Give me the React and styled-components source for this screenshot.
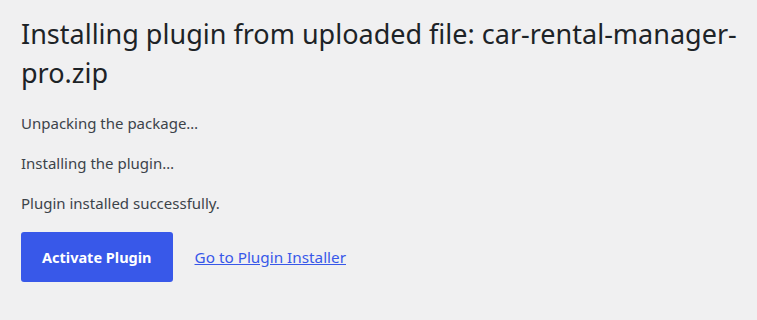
import React from 'react'
import styled, { createGlobalStyle } from 'styled-components'

const GlobalStyle = createGlobalStyle`
  html, body {
    margin: 0;
    padding: 0;
    background: #f0f0f1;
  }
  body {
    font-family: "Noto Sans", "Open Sans", sans-serif;
    color: #3c434a;
  }
`;

const Wrap = styled.div`
  padding: 14px 18px 20px 21px;
`;

const Title = styled.h1`
  margin: 0 0 20px;
  font-size: 27px;
  font-weight: 400;
  line-height: 39px;
  color: #1d2327;
`;

const Step = styled.p`
  margin: 0 0 18px;
  font-size: 15px;
  line-height: 22px;
`;

const Actions = styled.div`
  display: flex;
  align-items: center;
  gap: 22px;
  margin-top: 1px;
`;

const Button = styled.a`
  display: inline-flex;
  align-items: center;
  justify-content: center;
  height: 50px;
  padding: 0 21px;
  background: #3858e9;
  color: #fff;
  border-radius: 3px;
  font-size: 14.5px;
  font-weight: 700;
  text-decoration: none;
`;

const LinkText = styled.a`
  color: #3858e9;
  font-size: 15.3px;
  text-decoration: underline;
`;

export default function App() {
  return (
    <>
      <GlobalStyle />
      <Wrap>
        <Title>Installing plugin from uploaded file: car-rental-manager-pro.zip</Title>
        <Step>Unpacking the package…</Step>
        <Step>Installing the plugin…</Step>
        <Step>Plugin installed successfully.</Step>
        <Actions>
          <Button href="#">Activate Plugin</Button>
          <LinkText href="#">Go to Plugin Installer</LinkText>
        </Actions>
      </Wrap>
    </>
  )
}
